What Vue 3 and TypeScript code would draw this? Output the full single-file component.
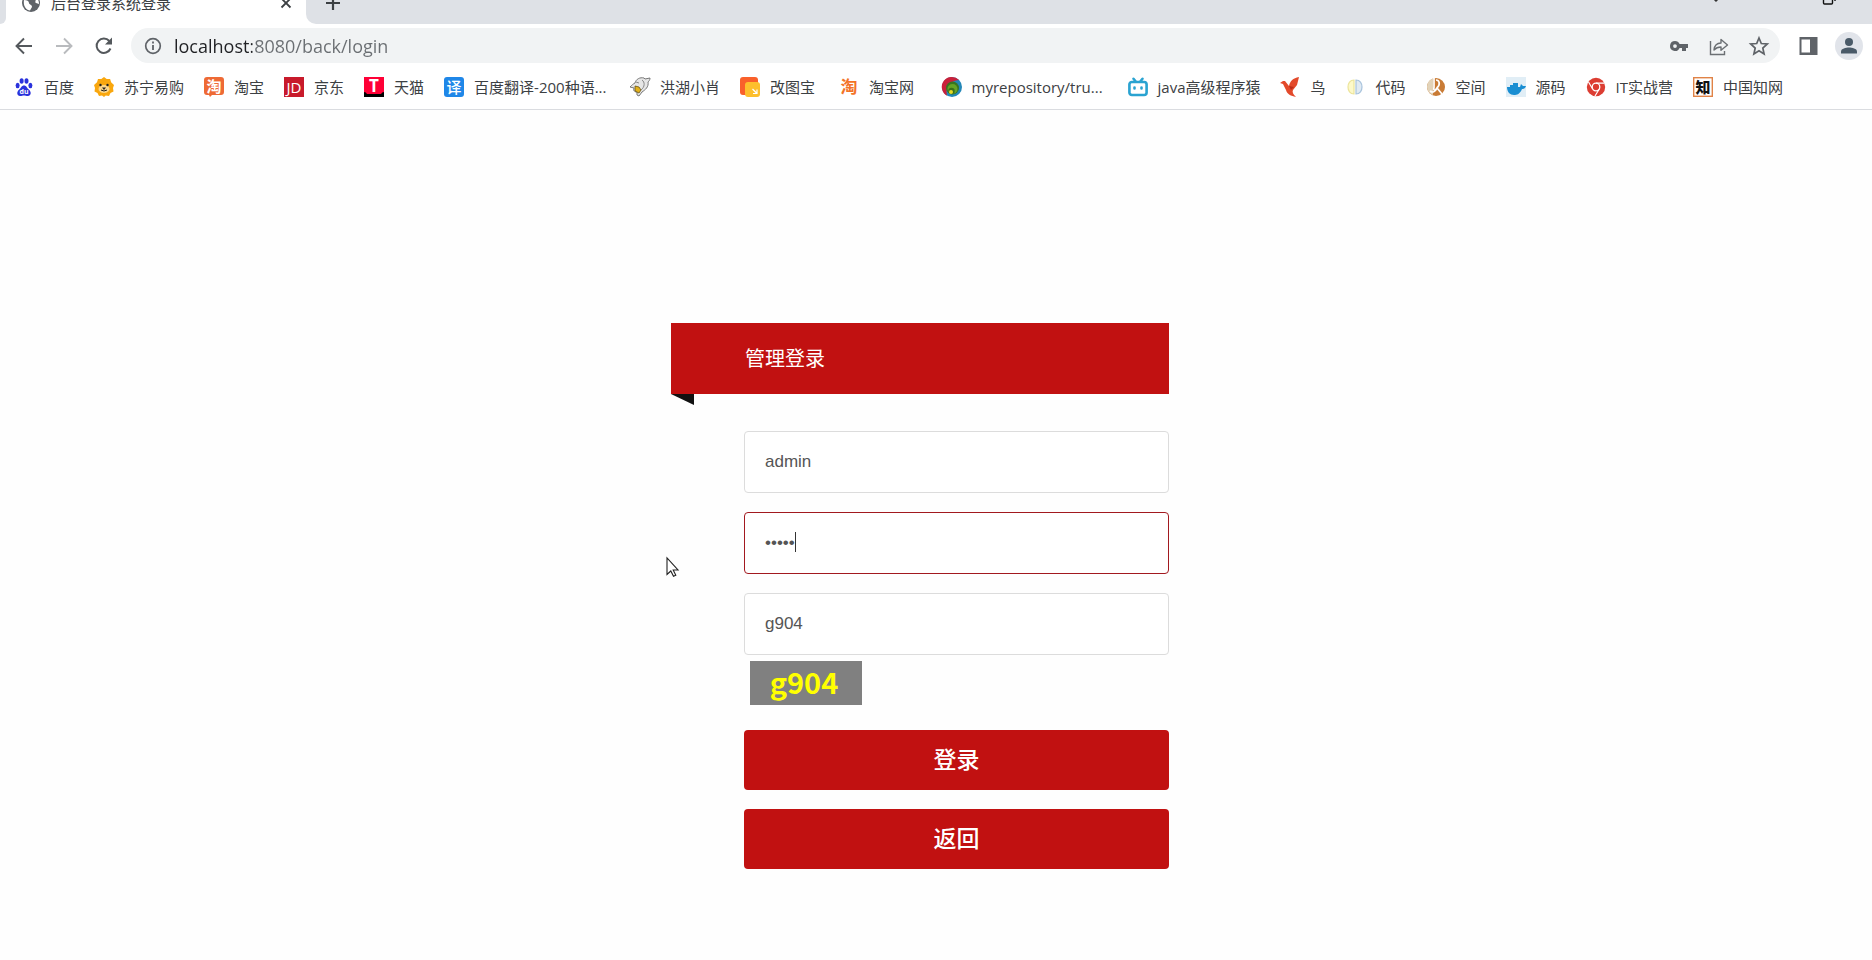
<script setup lang="ts">
import { ref } from 'vue'

interface Bookmark {
  title: string
  icon: string
  wide?: boolean
}

const bookmarks: Bookmark[] = [
  { title: '百度', icon: 'baidu' },
  { title: '苏宁易购', icon: 'suning' },
  { title: '淘宝', icon: 'taobao' },
  { title: '京东', icon: 'jd' },
  { title: '天猫', icon: 'tmall' },
  { title: '百度翻译-200种语...', icon: 'fanyi', wide: true },
  { title: '洪湖小肖', icon: 'duck' },
  { title: '改图宝\u00a0', icon: 'gaitu' },
  { title: '淘宝网\u2002', icon: 'tao' },
  { title: 'myrepository/tru...', icon: 'repo', wide: true },
  { title: 'java高级程序猿', icon: 'bili' },
  { title: '鸟', icon: 'bird' },
  { title: '代码', icon: 'code' },
  { title: '空间', icon: 'space' },
  { title: '源码', icon: 'docker' },
  { title: 'IT实战营', icon: 'chrome' },
  { title: '中国知网', icon: 'cnki' },
]

const url = ref('localhost:8080/back/login')
const username = ref('admin')
const password = ref('admin')
const captcha = ref('g904')
</script>

<template>
  <div class="window">
    <header class="browser">
      <div class="tabstrip">
        <div class="strip-left"></div>
        <div class="tab">
          <svg class="i20" viewBox="0 0 20 20"><circle cx="10" cy="10" r="9" fill="#5f6368" /><path d="M3 7c3 0 5 1 5 3s3 1 3 4l-2 3.500C5 17 2 13 3 7zM11 2c0 3 1 3 3 4s-1 3 1 4l3 1c0-4-2-8-7-9z" fill="#fff" /></svg>
          <span class="tab-title">后台登录系统登录</span>
          <button class="bare" aria-label="关闭标签页"><svg class="i14" viewBox="0 0 14 14"><path d="M2.500 2.500l9 9M11.500 2.500l-9 9" stroke="#3c4043" stroke-width="1.800" /></svg></button>
        </div>
        <div class="strip-rest">
          <button class="bare" aria-label="新标签页"><svg class="i16" viewBox="0 0 16 16"><path d="M8 1v14M1 8h14" stroke="#3c4043" stroke-width="2.200" /></svg></button>
          <div class="win-buttons">
            <button class="bare" aria-label="搜索标签页"><svg class="i12" viewBox="0 0 12 12"><path d="M1 2l5 5 5-5" fill="none" stroke="#333" stroke-width="1.500" /></svg></button>
            <button class="bare" aria-label="还原"><svg class="i14" viewBox="0 0 14 14"><path d="M1.500 2.500v7.500q0 1 1 1h7q1 0 1-1V2.500M4 .5h9V8" fill="none" stroke="#111" stroke-width="1.400" /></svg></button>
          </div>
        </div>
      </div>

      <div class="toolbar">
        <div class="nav">
          <button class="bare" aria-label="后退"><svg class="i20" viewBox="0 0 20 20"><path d="M18 10H3M10 2.500L2.500 10l7.500 7.500" fill="none" stroke="#54585c" stroke-width="1.900" /></svg></button>
          <button class="bare" aria-label="前进"><svg class="i20" viewBox="0 0 20 20"><path d="M2 10h15M10 2.500l7.500 7.500-7.500 7.500" fill="none" stroke="#b9bbbe" stroke-width="1.900" /></svg></button>
          <button class="bare" aria-label="重新加载"><svg class="i20" viewBox="0 0 20 20"><path d="M16.500 12.500A7.200 7.200 0 1 1 15.300 5" fill="none" stroke="#54585c" stroke-width="2" /><path d="M18 1.500v7h-7z" fill="#54585c" /></svg></button>
        </div>
        <div class="omnibox">
          <svg class="i20" viewBox="0 0 20 20"><circle cx="10" cy="10" r="7.300" fill="none" stroke="#5f6368" stroke-width="1.700" /><path d="M10 9v5M10 5.500v2" stroke="#5f6368" stroke-width="1.800" /></svg>
          <input v-model="url" class="url" type="text" aria-label="地址栏" />
          <div class="actions">
            <button class="bare" aria-label="密码"><svg class="i20" viewBox="0 0 20 20"><path fill-rule="evenodd" d="M6 5a5 5 0 1 0 4.600 7H13v3h4v-3h2V8h-8.400A5 5 0 0 0 6 5zm0 3.200a1.900 1.900 0 1 1 0 3.800 1.900 1.900 0 0 1 0-3.800z" fill="#5f6368" /></svg></button>
            <button class="bare" aria-label="分享"><svg class="i20" viewBox="0 0 20 20"><path d="M1.500 5v13.500h14V15" fill="none" stroke="#6b6f73" stroke-width="1.400" /><path d="M5 14c.5-4.500 3-7 7-7V3.500l6.500 5.500-6.500 5.200V11c-3 0-5 .8-7 3z" fill="none" stroke="#6b6f73" stroke-width="1.400" stroke-linejoin="round" /></svg></button>
            <button class="bare" aria-label="收藏"><svg class="i20" viewBox="0 0 20 20"><path d="M10 2l2.300 5.500 6 .5-4.500 4 1.300 6-5.100-3.200L4.900 18l1.300-6L1.700 8l6-.5z" fill="none" stroke="#5f6368" stroke-width="1.700" /></svg></button>
          </div>
        </div>
        <button class="bare panel" aria-label="侧边栏"><svg class="i20" viewBox="0 0 20 20"><path fill-rule="evenodd" d="M1.500 1h18v18h-18zM3.500 3.500v13h8.500v-13z" fill="#5f6368" /></svg></button>
        <button class="avatar" aria-label="用户"><svg class="i20" viewBox="0 0 20 20"><circle cx="10" cy="6" r="4" fill="#4a5a68" /><path d="M2 17.500v-2c0-3 5-4 8-4s8 1 8 4v2z" fill="#4a5a68" /></svg></button>
      </div>

      <nav class="bookmarks">
        <a v-for="b in bookmarks" :key="b.icon" href="#" class="bookmark">
          <svg class="i20" viewBox="0 0 20 20">
            <g v-if="b.icon === 'baidu'" fill="#2a32dc">
              <ellipse cx="3.600" cy="8.500" rx="2" ry="2.700" /><ellipse cx="7.600" cy="4" rx="2" ry="2.800" /><ellipse cx="12.500" cy="4" rx="2" ry="2.800" /><ellipse cx="16.400" cy="8.500" rx="2" ry="2.700" />
              <path d="M10 8.500c-2.500 0-3 2.500-4.500 3.800C2 15 3 19 6 19c2 0 2.500-.5 4-.5s2 .5 4 .5c3 0 4-4 .5-6.700C13 11 12.500 8.500 10 8.500z" />
              <text x="10" y="16.500" text-anchor="middle" font-size="7" font-weight="700" fill="#fff">du</text>
            </g>
            <g v-else-if="b.icon === 'suning'">
              <path d="M10 0l2.700 2 3.400.1 1 3.200L20 8l-1 3 .5 3.500-3 1.500-1.500 3-3.300-.5L10 20l-2-1.500-3 .5-1.500-3-3-1.500L1 11 0 8l3-2.700 1-3.200L7.300 2z" fill="#f9a70e" />
              <ellipse cx="10" cy="12" rx="5.500" ry="4" fill="#fcd68a" /><circle cx="6.500" cy="8" r="1.200" fill="#222" /><circle cx="13.500" cy="8" r="1.200" fill="#222" /><path d="M8 10.500h4l-2 2.500z" fill="#222" /><path d="M7 13q3 2 6 0" fill="none" stroke="#222" />
            </g>
            <g v-else-if="b.icon === 'taobao'">
              <path d="M3 0h14q3 0 3 3v12q0 3-3 3H8l-2 2-1-2H3q-3 0-3-3V3q0-3 3-3z" fill="#ee6a35" />
              <text x="10" y="15" text-anchor="middle" font-size="15" font-weight="700" fill="#fff">淘</text>
            </g>
            <g v-else-if="b.icon === 'jd'">
              <rect width="20" height="20" fill="#c81a2b" /><text x="10" y="15.500" text-anchor="middle" font-size="15" fill="#fff">JD</text>
            </g>
            <g v-else-if="b.icon === 'tmall'">
              <rect width="20" height="20" fill="#ff0036" /><path d="M0 15q2 0 3 2h14q1-2 3-2v5H0z" fill="#000" /><text x="10" y="14.500" text-anchor="middle" font-size="17" font-weight="700" fill="#fff">T</text>
            </g>
            <g v-else-if="b.icon === 'fanyi'">
              <rect width="20" height="20" rx="3" fill="#1f87e8" /><text x="10" y="15.500" text-anchor="middle" font-size="15" font-weight="500" fill="#fff">译</text>
            </g>
            <g v-else-if="b.icon === 'duck'">
              <path d="M0 10c2-2 3-3 5-4 1-4 5-6 9-5l1 1 5-1c0 2-1 3-2 4 1 5-3 8-6 10l-3 4-2-1v-3c-3 0-4-2-3-4z" fill="#e6e6e6" stroke="#777" stroke-width="1" /><path d="M5 9l4 1 2 3-2 3-4-2z" fill="#e3b21c" stroke="#665214" stroke-width=".8" /><path d="M6 5l3 1M12 3c3 2 3 7-1 10" fill="none" stroke="#888" stroke-width="1" />
            </g>
            <g v-else-if="b.icon === 'gaitu'">
              <rect width="18" height="18" rx="3" fill="#f9602b" /><rect x="5" y="5" width="15" height="15" rx="3" fill="#fdbf2d" /><path d="M12.500 12l4.500 4.500M17 12.500v4h-4" stroke="#fff" stroke-width="1.200" fill="none" />
            </g>
            <text v-else-if="b.icon === 'tao'" x="10" y="16" text-anchor="middle" font-size="17" font-weight="700" fill="#f37327">淘</text>
            <g v-else-if="b.icon === 'repo'">
              <circle cx="10" cy="10" r="10" fill="#2387b8" /><path d="M17 3A10 10 0 1 0 5 18.700C3 9 8 4 17 3z" fill="#c9203a" /><circle cx="10.500" cy="11" r="6.500" fill="#38741f" /><circle cx="10.500" cy="12" r="5" fill="#65a325" /><circle cx="9.500" cy="14" r="3.200" fill="#376f1a" /><circle cx="9" cy="15" r="2" fill="#e4da26" />
            </g>
            <g v-else-if="b.icon === 'bili'" fill="none" stroke="#2aa3d1" stroke-width="2.600" stroke-linecap="round">
              <rect x="1.400" y="5" width="17.200" height="13" rx="2.500" /><path d="M5.500 1.800l2 2.500M14.500 1.800l-2 2.500M6.500 10.500v1M13.500 10.500v1" />
            </g>
            <g v-else-if="b.icon === 'bird'">
              <path d="M0 6l3-2h2l4 5c1-5 4-8 10-9l-2 8-4 5c-1 2 0 4 3 7-5-1-9-3-10-7L3 7z" fill="#e34a2b" /><path d="M9 9l5 1-3 3z" fill="#bb2c18" />
            </g>
            <g v-else-if="b.icon === 'code'" fill="none" stroke-width="1.200">
              <path d="M9 3C1 3 1 17 9 17z" fill="#fdf9c9" stroke="#ece49a" /><path d="M11 3c8 0 8 14 0 14z" fill="#e0eaf3" stroke="#a8c3dc" />
            </g>
            <g v-else-if="b.icon === 'space'">
              <circle cx="10" cy="10" r="9" fill="#c97b35" /><path d="M1 10a9 9 0 0 1 6-8.500V18a9 9 0 0 1-6-8z" fill="#e2d3b9" /><path d="M8 1v9q-1 6 3 1c4-4 2-8-1-8M4 14q4 3 7-3l5 6" fill="none" stroke="#fff" stroke-width="1.700" />
            </g>
            <g v-else-if="b.icon === 'docker'">
              <rect width="20" height="20" fill="#e1eef6" /><path d="M1 10h3V8h3V6h5v4h2l1-3 2 2h3c-1 3-3 3-4 3-2 5-5 6-8 6-4 0-7-3-7-8z" fill="#1a8ed2" />
            </g>
            <g v-else-if="b.icon === 'chrome'">
              <circle cx="10" cy="10" r="9.200" fill="#dc3d32" /><circle cx="10" cy="10" r="3.800" fill="none" stroke="#fff" stroke-width="1.300" /><path d="M10 6.200h8.500M6.700 12L2.500 5M13.300 12L9 19" stroke="#fff" stroke-width="1.200" />
            </g>
            <g v-else>
              <rect x=".7" y=".7" width="18.600" height="18.600" fill="#fff" stroke="#e08347" stroke-width="1.400" /><text x="10" y="15.500" text-anchor="middle" font-size="15" font-weight="900" fill="#111">知</text>
            </g>
          </svg>
          <span :class="{ wide: b.wide }">{{ b.title }}</span>
        </a>
      </nav>
    </header>

    <main class="page">
      <form class="login" @submit.prevent>
        <h1 class="banner">管理登录</h1>
        <div class="fields">
          <input v-model="username" class="field" type="text" aria-label="用户名" />
          <div class="password">
            <input v-model="password" class="field active" type="password" aria-label="密码" />
            <span class="caret"></span>
          </div>
          <div class="code">
            <input v-model="captcha" class="field" type="text" aria-label="验证码" />
            <div class="captcha">g904</div>
          </div>
          <button class="action" type="submit">登录</button>
          <button class="action" type="button">返回</button>
        </div>
      </form>
      <svg class="pointer" viewBox="0 0 13 20"><path d="M1 1v16.500l3.800-3.500 2.700 5.300 2.300-1-2.600-5.300H12z" fill="#fff" stroke="#222" stroke-width="1.100" /></svg>
    </main>
  </div>
</template>

<style>
body {
  margin: 0;
  background: #fefefe;
}
</style>

<style scoped>
.window {
  display: flex;
  flex-direction: column;
  min-height: 100vh;
  overflow: hidden;
  font-family: 'Open Sans', 'Noto Sans CJK SC', sans-serif;
  color: #3c4043;
}
.window *,
.window {
  box-sizing: border-box;
}
svg {
  display: block;
  flex: none;
  overflow: visible;
}
.i12 { width: 12px; height: 12px; }
.i14 { width: 14px; height: 14px; }
.i16 { width: 16px; height: 16px; }
.i20 { width: 20px; height: 20px; }
.bare {
  display: flex;
  padding: 0;
  border: 0;
  background: none;
}
.browser {
  background: #fff;
}
.tabstrip {
  display: flex;
  align-items: flex-end;
  height: 24px;
  overflow: hidden;
}
.strip-left {
  width: 6px;
  height: 42px;
  border-radius: 0 0 8px 0;
  background: #dee1e6;
}
.tab {
  display: flex;
  align-items: center;
  width: 300px;
  height: 42px;
  padding: 0 13px 0 15px;
}
.tab-title {
  flex: 1;
  margin-left: 10px;
  font-size: 15px;
  line-height: 20px;
}
.strip-rest {
  display: flex;
  flex: 1;
  align-items: center;
  justify-content: space-between;
  height: 42px;
  padding: 0 36px 0 19px;
  border-radius: 0 0 0 10px;
  background: #dee1e6;
}
.win-buttons {
  display: flex;
  align-items: center;
  gap: 100px;
  margin-bottom: 6px;
}
.toolbar {
  display: flex;
  align-items: center;
  padding: 4px 9px 3px 14px;
}
.nav {
  display: flex;
  gap: 20px;
}
.omnibox {
  display: flex;
  flex: 1;
  align-items: center;
  height: 35px;
  margin-left: 17px;
  padding: 0 11px 0 12px;
  border-radius: 18px;
  background: #f1f3f4;
}
.url {
  flex: 1;
  min-width: 0;
  height: 30px;
  margin-left: 11px;
  padding: 0;
  border: 0;
  outline: 0;
  background: linear-gradient(90deg, #202124 78px, #6a6e72 78px);
  -webkit-background-clip: text;
  background-clip: text;
  color: transparent;
  font: 18px 'Open Sans', sans-serif;
}
.actions {
  display: flex;
  gap: 20px;
}
.panel {
  margin: 0 17px 0 18px;
}
.avatar {
  display: flex;
  align-items: center;
  justify-content: center;
  width: 28px;
  height: 28px;
  padding: 0;
  border: 0;
  border-radius: 50%;
  background: #e1e4ea;
}
.bookmarks {
  display: flex;
  align-items: center;
  gap: 20px;
  height: 44px;
  padding: 0 14px 1px;
  border-bottom: 1px solid #dadce0;
  overflow: hidden;
}
.bookmark {
  display: flex;
  flex: none;
  align-items: center;
  gap: 10px;
  color: #3c4043;
  font-size: 15px;
  line-height: 20px;
  text-decoration: none;
  white-space: nowrap;
}
.wide {
  width: 136px;
}
.page {
  position: relative;
  display: flex;
  flex: 1;
  align-items: flex-start;
  justify-content: center;
  padding: 213px 32px 40px 0;
}
.login {
  width: 498px;
}
.banner {
  position: relative;
  margin: 0;
  padding: 21px 74px 20px;
  background: #c11111;
  color: #fff;
  font-size: 20px;
  font-weight: 400;
  line-height: 30px;
}
.banner::after {
  content: '';
  position: absolute;
  top: 100%;
  left: 0;
  width: 23px;
  height: 11px;
  background: #111;
  clip-path: polygon(0 0, 100% 0, 100% 100%);
}
.fields {
  display: flex;
  flex-direction: column;
  gap: 19px;
  padding: 37px 0 0 73px;
}
.field {
  display: block;
  width: 100%;
  height: 62px;
  padding: 0 20px 1px;
  border: 1px solid #dcdcdc;
  border-radius: 4px;
  outline: 0;
  background: #fff;
  color: #555;
  font: 17px 'Liberation Sans', Arial, sans-serif;
}
.active {
  border-color: #a2191f;
}
.password {
  position: relative;
}
.caret {
  position: absolute;
  top: 20px;
  left: 51px;
  width: 1px;
  height: 20px;
  background: #333;
}
.captcha {
  width: 112px;
  height: 44px;
  margin: 6px 0 6px 6px;
  padding-right: 4px;
  background: #808080;
  color: #ff0;
  font: 700 29px/40px 'Noto Sans CJK SC', sans-serif;
  text-align: center;
}
.action {
  height: 60px;
  padding: 0 0 4px;
  border: 0;
  border-radius: 4px;
  background: #c11111;
  color: #fff;
  font: 500 23px 'Noto Sans CJK SC', sans-serif;
}
.pointer {
  position: absolute;
  top: 447px;
  left: calc(50% - 270px);
  width: 13px;
  height: 20px;
}
</style>
